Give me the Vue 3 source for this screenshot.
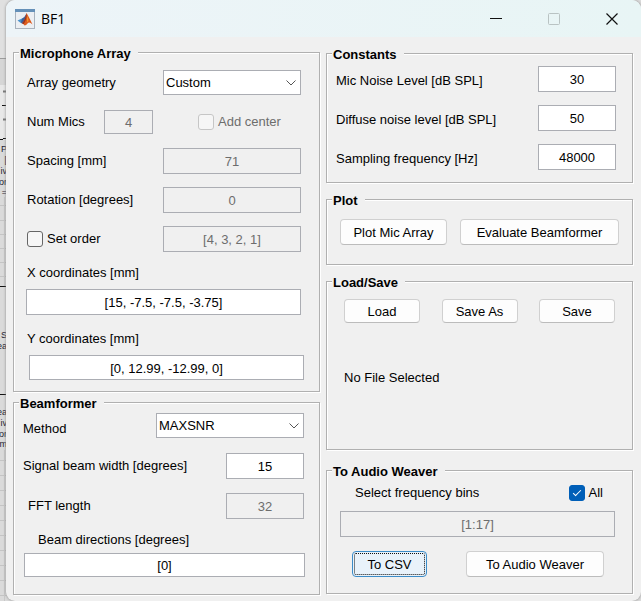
<script setup>
import { ref } from 'vue'

const geometry = ref('Custom')
const method = ref('MAXSNR')
const addCenter = ref(false)
const setOrder = ref(false)
const allBins = ref(true)
const numMics = ref('4')
const spacing = ref('71')
const rotation = ref('0')
const order = ref('[4, 3, 2, 1]')
const xCoords = ref('[15, -7.5, -7.5, -3.75]')
const yCoords = ref('[0, 12.99, -12.99, 0]')
const beamWidth = ref('15')
const fftLength = ref('32')
const directions = ref('[0]')
const bins = ref('[1:17]')

const constants = ref([
  { id: 'mic-noise', label: 'Mic Noise Level [dB SPL]', value: '30' },
  { id: 'diffuse-noise', label: 'Diffuse noise level [dB SPL]', value: '50' },
  { id: 'sampling', label: 'Sampling frequency [Hz]', value: '48000' },
])

const gridLines = [205, 220, 234, 248, 262, 276, 460, 475, 490, 505, 520, 535, 550, 565, 580, 595]
const snippets = [
  { y: 152, text: 'P' }, { y: 163, text: '[' }, { y: 174, text: 'iv' },
  { y: 185, text: 'or' }, { y: 195, text: '=' }, { y: 338, text: 'S' },
  { y: 349, text: 'ea' }, { y: 415, text: 'ea' }, { y: 426, text: 'iv' },
  { y: 437, text: 'or' }, { y: 447, text: 'm' },
]
</script>

<template>
  <div class="desktop">
    <svg class="behind" width="14" height="601" aria-hidden="true">
      <rect width="14" height="601" fill="#dadada" />
      <rect width="14" height="58" fill="#e0e0e0" />
      <rect y="59" width="14" height="26" fill="#d6d6d6" />
      <rect y="85" width="14" height="55" fill="#e8e8e8" />
      <path d="M0 58.5H14" stroke="#9c9c9c" />
      <path d="M3 91.5H6M3 119.5H6" stroke="#777" stroke-width="2" />
      <path d="M2 105.5H6M3 138.5H6M0 139.5H3M0 286.5H14M0 394.5H14" stroke="#111" />
      <path v-for="y in gridLines" :key="y" :d="`M0 ${y}.5H14`" stroke="#c4c4c4" />
      <path d="M4.5 197V286M4.5 450V601" stroke="#c8c8c8" />
      <text v-for="s in snippets" :key="s.y" x="7" :y="s.y" text-anchor="end">{{ s.text }}</text>
    </svg>

    <main class="window">
      <header class="titlebar">
        <svg class="logo" width="20" height="20" viewBox="0 0 20 20" aria-hidden="true">
          <rect x="0.5" y="0.5" width="19" height="19" fill="#eceff3" stroke="#a9b2bd" />
          <rect width="20" height="3" fill="#6590b8" />
          <path d="M2.500 11.500L7 9.500L9.500 12L6.500 14.500Z" fill="#4a92cc" />
          <path d="M7 9.500Q10 8 11.500 4.500L10.500 11L7.500 14.500L6 13.500Z" fill="#3a5f9c" />
          <path d="M11.500 4Q14 8 17.500 15.500Q14.500 12.500 13 14Q11 16.500 9.500 16.500Q8.500 14.500 7 14.200Q10 11.500 11.500 4Z" fill="#dc5b1f" />
          <path d="M11.500 4Q12 8 10.800 11Q9.500 14 8.500 15.200Q8 14.500 7 14.200Q10 11.500 11.500 4Z" fill="#9a3520" />
          <path d="M12 6.500Q13.500 9.500 13.500 12L12 13.500Z" fill="#f0932b" />
        </svg>
        <h1>BF1</h1>
        <div class="caption">
          <button type="button" aria-label="Minimize">
            <svg width="14" height="14"><path d="M1 6.500H13" stroke="#111" /></svg>
          </button>
          <button type="button" aria-label="Maximize" disabled>
            <svg width="14" height="14"><rect x="1.500" y="1.500" width="11" height="11" rx="1" fill="none" stroke="#b9c3c3" /></svg>
          </button>
          <button type="button" aria-label="Close">
            <svg width="14" height="14"><path d="M1.500 1.500L12.500 12.500M12.500 1.500L1.500 12.500" stroke="#111" stroke-width="1.200" /></svg>
          </button>
        </div>
      </header>

      <div class="columns">
        <div class="column">
          <section class="panel array">
            <h2>Microphone Array</h2>
            <div class="row">
              <label for="geometry">Array geometry</label>
              <span class="select mid">
                <select id="geometry" v-model="geometry"><option>Custom</option></select>
                <svg width="10" height="6"><path d="M0.500 0.500L5 5L9.500 0.500" /></svg>
              </span>
            </div>
            <div class="row">
              <label for="mics" class="mics-label">Num Mics</label>
              <input id="mics" v-model="numMics" class="tiny" type="text" disabled>
              <label class="check mid off"><input v-model="addCenter" type="checkbox" disabled>Add center</label>
            </div>
            <div class="row">
              <label for="spacing">Spacing [mm]</label>
              <input id="spacing" v-model="spacing" class="mid" type="text" disabled>
            </div>
            <div class="row">
              <label for="rotation">Rotation [degrees]</label>
              <input id="rotation" v-model="rotation" class="mid" type="text" disabled>
            </div>
            <div class="row">
              <label class="check"><input v-model="setOrder" type="checkbox">Set order</label>
              <input v-model="order" class="mid" type="text" aria-label="Order" disabled>
            </div>
            <div class="stack outset">
              <label for="xs">X coordinates [mm]</label>
              <input id="xs" v-model="xCoords" type="text">
            </div>
            <div class="stack inset">
              <label for="ys">Y coordinates [mm]</label>
              <input id="ys" v-model="yCoords" type="text">
            </div>
          </section>

          <section class="panel beam">
            <h2>Beamformer</h2>
            <div class="row method-row">
              <label for="method">Method</label>
              <span class="select wide">
                <select id="method" v-model="method"><option>MAXSNR</option></select>
                <svg width="10" height="6"><path d="M0.500 0.500L5 5L9.500 0.500" /></svg>
              </span>
            </div>
            <div class="row">
              <label for="width">Signal beam width [degrees]</label>
              <input id="width" v-model="beamWidth" class="short" type="text">
            </div>
            <div class="row">
              <label for="fft" class="indent">FFT length</label>
              <input id="fft" v-model="fftLength" class="short" type="text" disabled>
            </div>
            <div class="stack">
              <label for="dirs">Beam directions [degrees]</label>
              <input id="dirs" v-model="directions" type="text">
            </div>
          </section>
        </div>

        <div class="column right">
          <section class="panel constants">
            <h2>Constants</h2>
            <div v-for="c in constants" :key="c.id" class="row">
              <label :for="c.id">{{ c.label }}</label>
              <input :id="c.id" v-model="c.value" class="short" type="text">
            </div>
          </section>

          <section class="panel plot">
            <h2>Plot</h2>
            <div class="buttons">
              <button type="button">Plot Mic Array</button>
              <button type="button">Evaluate Beamformer</button>
            </div>
          </section>

          <section class="panel files">
            <h2>Load/Save</h2>
            <div class="buttons">
              <button type="button">Load</button>
              <button type="button">Save As</button>
              <button type="button">Save</button>
            </div>
            <p>No File Selected</p>
          </section>

          <section class="panel weaver">
            <h2>To Audio Weaver</h2>
            <div class="bins">
              <label for="bins">Select frequency bins</label>
              <label class="check"><input v-model="allBins" type="checkbox">All</label>
            </div>
            <input id="bins" v-model="bins" type="text" disabled>
            <div class="buttons">
              <button type="button" class="focused">To CSV</button>
              <button type="button">To Audio Weaver</button>
            </div>
          </section>
        </div>
      </div>
    </main>
  </div>
</template>

<style>
body {
  margin: 0;
  background: #dcdcdc;
}
</style>

<style scoped>
.desktop {
  position: relative;
  box-sizing: border-box;
  min-height: 100vh;
  padding-left: 6px;
  display: flex;
  overflow: hidden;
  font: 13px/16px "Liberation Sans", Arial, sans-serif;
  color: #000;
}
.behind {
  position: absolute;
  left: 0;
  top: 0;
}
.behind text {
  font-size: 9px;
  fill: #223;
}
.window {
  position: relative;
  flex: 1;
  min-width: 0;
  background: #f0f0f0;
  border-radius: 9px;
  overflow: hidden;
  box-shadow: 0 0 3px #888;
}
.titlebar {
  display: flex;
  align-items: center;
  height: 37px;
  padding-left: 9px;
  background: linear-gradient(90deg, #edf4f8, #e8f5f5);
}
h1 {
  flex: 1;
  margin: 0 0 0 6px;
  font: 14px/20px "Open Sans", "Noto Sans", sans-serif;
}
.caption {
  display: flex;
}
.caption button {
  display: grid;
  place-items: center;
  width: 58px;
  height: 36px;
  padding: 0;
  border: 0;
  background: none;
}
.columns {
  display: grid;
  grid-template-columns: 1fr 1fr;
  gap: 6px;
  padding: 15px 8px 6px 7px;
}
.column {
  min-width: 0;
  display: flex;
  flex-direction: column;
}
.right {
  padding-top: 1px;
}
.panel {
  box-sizing: border-box;
  border: 1px solid #b0b0b0;
  box-shadow: 1px 1px #fff, inset 1px 1px #fff;
}
h2 {
  width: max-content;
  margin: -7px 0 -1px 5px;
  padding: 0 7px 0 1px;
  background: #f0f0f0;
  font: bold 13px/16px "Liberation Sans", Arial, sans-serif;
}
.row {
  display: flex;
  align-items: center;
  justify-content: space-between;
  height: 39px;
}
.stack {
  display: flex;
  flex-direction: column;
}
input[type="text"],
select {
  box-sizing: border-box;
  width: 100%;
  min-width: 0;
  height: 26px;
  margin: 0;
  padding: 1px 3px 0;
  border: 1px solid #abadb3;
  border-radius: 0;
  background: #fff;
  font: inherit;
  color: #000;
  text-align: center;
}
input[type="text"]:disabled {
  background: #f0f0f0;
  color: #6d6d6d;
}
select {
  appearance: none;
  grid-area: 1 / 1;
  height: 25px;
  padding: 0 2px;
  text-align: left;
}
.select {
  display: grid;
  align-items: center;
}
.select svg {
  grid-area: 1 / 1;
  justify-self: end;
  margin-right: 5px;
  fill: none;
  stroke: #555;
  pointer-events: none;
}
.check {
  display: flex;
  align-items: center;
  gap: 4px;
}
.check input {
  appearance: none;
  display: grid;
  place-items: center;
  box-sizing: border-box;
  width: 16px;
  height: 16px;
  margin: 0;
  border: 1px solid #666;
  border-radius: 3px;
  background: #f6f6f6;
}
.check input:checked {
  border-color: #005fb8;
  background: #005fb8;
}
.check input:checked::before {
  content: "";
  width: 7px;
  height: 3px;
  margin-bottom: 3px;
  border: solid #fff;
  border-width: 0 0 1px 1px;
  transform: rotate(-45deg);
}
.check.off {
  color: #6d6d6d;
}
.check.off input {
  border-color: #c6c6c6;
}
.panel .mid {
  width: 138px;
}
.panel .check.mid {
  box-sizing: border-box;
  padding-left: 35px;
}
.panel .short {
  width: 78px;
}
.panel .wide {
  width: 148px;
}
.panel .tiny {
  width: 49px;
  height: 24px;
}
.mics-label {
  width: 67px;
}
.array {
  padding: 0 18px 11px 13px;
}
.array h2 {
  margin-left: -8px;
}
.array h2 + .row {
  margin-top: 2px;
}
.array .stack {
  gap: 8px;
}
.outset {
  margin-left: -1px;
  padding-top: 7px;
}
.outset label {
  padding-left: 1px;
}
.inset {
  margin-right: -3px;
  padding-top: 16px;
}
.inset input[type="text"] {
  align-self: flex-end;
  width: calc(100% - 2px);
  height: 25px;
}
.beam {
  margin-top: 10px;
  padding: 0 15px 17px 9px;
}
.beam h2 {
  margin-left: -4px;
}
.beam .row {
  height: 40px;
}
.beam .method-row {
  height: 41px;
  margin-top: -7px;
}
.method-row label {
  padding-top: 7px;
}
.indent {
  padding-left: 5px;
}
.beam .stack {
  gap: 5px;
  margin: 0 -1px 0 1px;
  padding-top: 6px;
}
.beam .stack label {
  padding-left: 14px;
}
.beam .stack input {
  height: 24px;
}
.constants {
  padding: 0 16px 6px 9px;
}
.constants h2 {
  margin-left: -4px;
}
.constants h2 + .row {
  margin-top: -4px;
}
.constants label {
  padding-top: 5px;
}
.buttons {
  display: flex;
}
.buttons button {
  box-sizing: border-box;
  height: 26px;
  padding: 1px 0 0;
  border: 1px solid #d0d0d0;
  border-bottom-color: #bcbcbc;
  border-radius: 4px;
  background: #fdfdfd;
  font: inherit;
  color: #000;
}
.plot {
  margin-top: 16px;
  padding-bottom: 19px;
}
.plot .buttons {
  display: grid;
  grid-template-columns: 107fr 159fr;
  gap: 13px;
  padding: 11px 13px 0 13px;
}
.files {
  margin-top: 16px;
  padding-bottom: 63px;
}
.files .buttons {
  display: grid;
  grid-template-columns: repeat(3, 76px);
  justify-content: space-between;
  padding: 9px 17px 0 17px;
}
.files .buttons button {
  height: 24px;
}
.files p {
  margin: 47px 0 0 17px;
}
.weaver {
  margin-top: 20px;
  padding: 0 17px 16px 13px;
}
.weaver h2 {
  margin-left: -8px;
}
.bins {
  display: flex;
  justify-content: space-between;
  padding: 6px 12px 10px 15px;
}
.weaver .buttons {
  display: grid;
  grid-template-columns: 75fr 138fr;
  gap: 39px;
  padding: 14px 11px 0 12px;
}
.weaver .buttons .focused {
  border-color: #3c8cc8;
  background: #e9f2fa;
  outline: 1px dotted #111;
  outline-offset: -3px;
}
</style>
